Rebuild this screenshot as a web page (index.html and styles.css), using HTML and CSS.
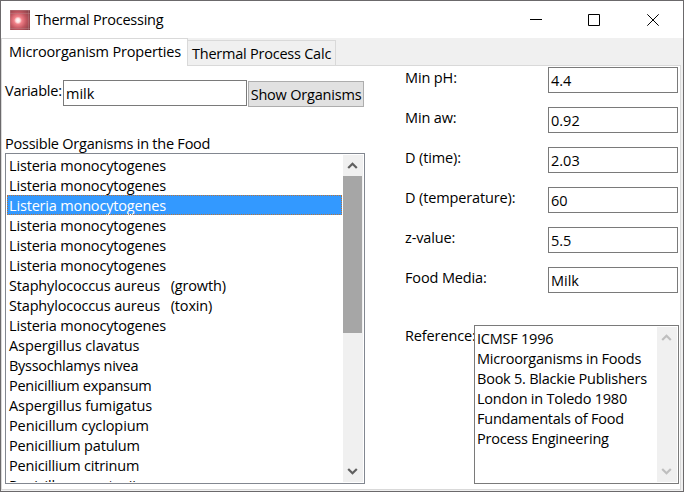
FILE: index.html
```html
<!DOCTYPE html>
<html lang="en">
<head>
<meta charset="utf-8">
<title>Thermal Processing</title>
<link rel="stylesheet" href="styles.css">
</head>
<body>
<div class="window">
  <header class="titlebar">
    <svg class="app-icon" width="20" height="20" viewBox="0 0 20 20">
      <defs>
        <radialGradient id="glow" cx="0.4" cy="0.52" r="0.7">
          <stop offset="0" stop-color="#fff"/>
          <stop offset="0.15" stop-color="#ffe0e0"/>
          <stop offset="0.28" stop-color="#f08088"/>
          <stop offset="0.6" stop-color="#c0555f"/>
          <stop offset="1" stop-color="#854248"/>
        </radialGradient>
      </defs>
      <rect width="20" height="20" fill="url(#glow)"/>
      <path d="M0 .5h20M0 3.5h20M.5 0v20M18.5 0v20M0 18.5h20" stroke="#b98085" stroke-opacity=".45"/>
    </svg>
    <span class="title">Thermal Processing</span>
    <svg class="controls" width="130" height="14" viewBox="0 0 130 14" fill="none" stroke="#000">
      <path d="M0 6.5h12M58.5 1.5h11v11h-11zM117.3 1.3l11.4 11.4M128.7 1.3l-11.4 11.4"/>
    </svg>
  </header>
  <nav class="tabs">
    <div class="tab active">Microorganism Properties</div>
    <div class="tab">Thermal Process Calc</div>
  </nav>
  <main class="pane">
    <section class="left">
      <div class="search">
        <span class="label">Variable:</span>
        <div class="field">milk</div>
        <button class="show">Show Organisms</button>
      </div>
      <div class="caption">Possible Organisms in the Food</div>
      <div class="listbox">
        <ul class="items">
          <li>Listeria monocytogenes</li>
          <li>Listeria monocytogenes</li>
          <li class="selected">Listeria monocytogenes</li>
          <li>Listeria monocytogenes</li>
          <li>Listeria monocytogenes</li>
          <li>Listeria monocytogenes</li>
          <li>Staphylococcus aureus   (growth)</li>
          <li>Staphylococcus aureus   (toxin)</li>
          <li>Listeria monocytogenes</li>
          <li class="loose">Aspergillus clavatus</li>
          <li class="tight">Byssochlamys nivea</li>
          <li class="tight">Penicillium expansum</li>
          <li class="loose">Aspergillus fumigatus</li>
          <li class="loose">Penicillum cyclopium</li>
          <li>Penicillium patulum</li>
          <li>Penicillium citrinum</li>
          <li>Penicillum crustosii</li>
        </ul>
        <div class="scrollbar">
          <svg width="19" height="21" viewBox="0 0 19 21"><path d="M5.2 13l4.3-4.3 4.3 4.3"/></svg>
          <div class="thumb"></div>
          <svg width="19" height="21" viewBox="0 0 19 21"><path d="M5.2 8l4.3 4.3L13.8 8"/></svg>
        </div>
      </div>
    </section>
    <section class="right">
      <div class="row"><span class="label">Min pH:</span><div class="field">4.4</div></div>
      <div class="row"><span class="label">Min aw:</span><div class="field">0.92</div></div>
      <div class="row"><span class="label">D (time):</span><div class="field">2.03</div></div>
      <div class="row"><span class="label">D (temperature):</span><div class="field">60</div></div>
      <div class="row"><span class="label">z-value:</span><div class="field">5.5</div></div>
      <div class="row"><span class="label">Food Media:</span><div class="field">Milk</div></div>
      <div class="reference">
        <span class="label">Reference:</span>
        <div class="memo">
          <div class="memo-text">ICMSF 1996<br>Microorganisms in Foods<br>Book 5. Blackie Publishers<br>London in Toledo 1980<br>Fundamentals of Food<br>Process Engineering</div>
          <div class="scrollbar disabled">
            <svg width="20" height="21" viewBox="0 0 20 21"><path d="M5.2 13l4.3-4.3 4.3 4.3"/></svg>
            <svg width="20" height="21" viewBox="0 0 20 21"><path d="M5.2 8l4.3 4.3L13.8 8"/></svg>
          </div>
        </div>
      </div>
    </section>
  </main>
</div>
</body>
</html>
```
FILE: styles.css
```css
* { box-sizing: border-box; }
body {
  margin: 0;
  font: 14.5px/20px "Open Sans", "Noto Sans", sans-serif;
  letter-spacing: -0.23px;
  color: #000;
  background: #fff;
}
.window {
  width: 684px;
  height: 492px;
  display: flex;
  flex-direction: column;
  border: 1px solid #6b696b;
  background: #f0f0f0;
  overflow: hidden;
}
.titlebar {
  flex: none;
  height: 37px;
  display: flex;
  align-items: center;
  padding: 0 23px 0 9px;
  background: #fff;
}
.title { margin-left: 5px; }
.controls { margin-left: auto; }
.tabs {
  flex: none;
  display: flex;
  height: 27px;
}
.tab {
  height: 26px;
  margin-top: 2px;
  padding: 3px 0 0 4px;
  width: 148px;
  border: 1px solid #d9d9d9;
  border-left: 0;
  white-space: nowrap;
  z-index: 0;
}
.tab.active {
  width: 187px;
  height: 28px;
  margin-top: 0;
  padding: 3px 0 0 7px;
  border-left: 1px solid #d9d9d9;
  border-bottom: 0;
  background: #fff;
  letter-spacing: -0.15px;
  z-index: 1;
}
.pane {
  flex: none;
  width: 680px;
  height: 425px;
  display: flex;
  border: 1px solid #d9d9d9;
  background: #fff;
}
.left { width: 403px; padding: 14px 0 0 3px; }
.search { display: flex; align-items: flex-start; }
.search .label { width: 58px; margin-top: 1px; }
.search .field { width: 184px; }
.label { white-space: nowrap; }
.field {
  height: 26px;
  padding: 3px 0 0 2px;
  border: 1px solid #7a7a7a;
  background: #fff;
  letter-spacing: 0;
}
.show {
  width: 116px;
  height: 26px;
  margin: 1px 0 0 1px;
  padding: 2px 0 0;
  border: 1px solid #adadad;
  background: #e1e1e1;
  font: inherit;
  letter-spacing: -0.2px;
  color: inherit;
  white-space: nowrap;
}
.caption { margin-top: 26px; height: 20px; line-height: 22px; }
.listbox {
  width: 360px;
  height: 331px;
  display: flex;
  justify-content: space-between;
  padding: 1px;
  border: 1px solid #828790;
}
.items {
  width: 335px;
  margin: 0;
  padding: 0;
  list-style: none;
  overflow: hidden;
  letter-spacing: -0.17px;
}
.items li {
  height: 20px;
  padding-left: 2px;
  line-height: 21px;
  white-space: pre;
}
.items .tight { letter-spacing: -0.27px; }
.items .loose { letter-spacing: -0.1px; }
.items .selected {
  color: #fff;
  background: #3399ff;
  outline: 1px dotted #b8743c;
  outline-offset: -1px;
}
.scrollbar {
  width: 20px;
  display: flex;
  flex-direction: column;
  background: #f0f0f0;
}
.scrollbar svg { fill: none; stroke: #606060; stroke-width: 2.2; display: block; }
.thumb { width: 19px; height: 157px; margin-bottom: auto; background: #a6a6a6; }
.disabled { justify-content: space-between; }
.scrollbar.disabled svg { stroke: #bfbfbf; }
.right { width: 274px; padding-top: 1px; }
.row { display: flex; justify-content: space-between; height: 40px; }
.right .label { margin-top: 1px; letter-spacing: -0.13px; }
.row .field { width: 130px; margin-right: 1px; }
.reference { display: flex; margin-top: 18px; }
.reference .label { width: 69px; }
.memo {
  flex: none;
  width: 205px;
  height: 159px;
  display: flex;
  justify-content: space-between;
  padding: 1px;
  border: 1px solid #7a7a7a;
}
.memo-text { padding: 2px 0 0 1px; white-space: nowrap; }
```
